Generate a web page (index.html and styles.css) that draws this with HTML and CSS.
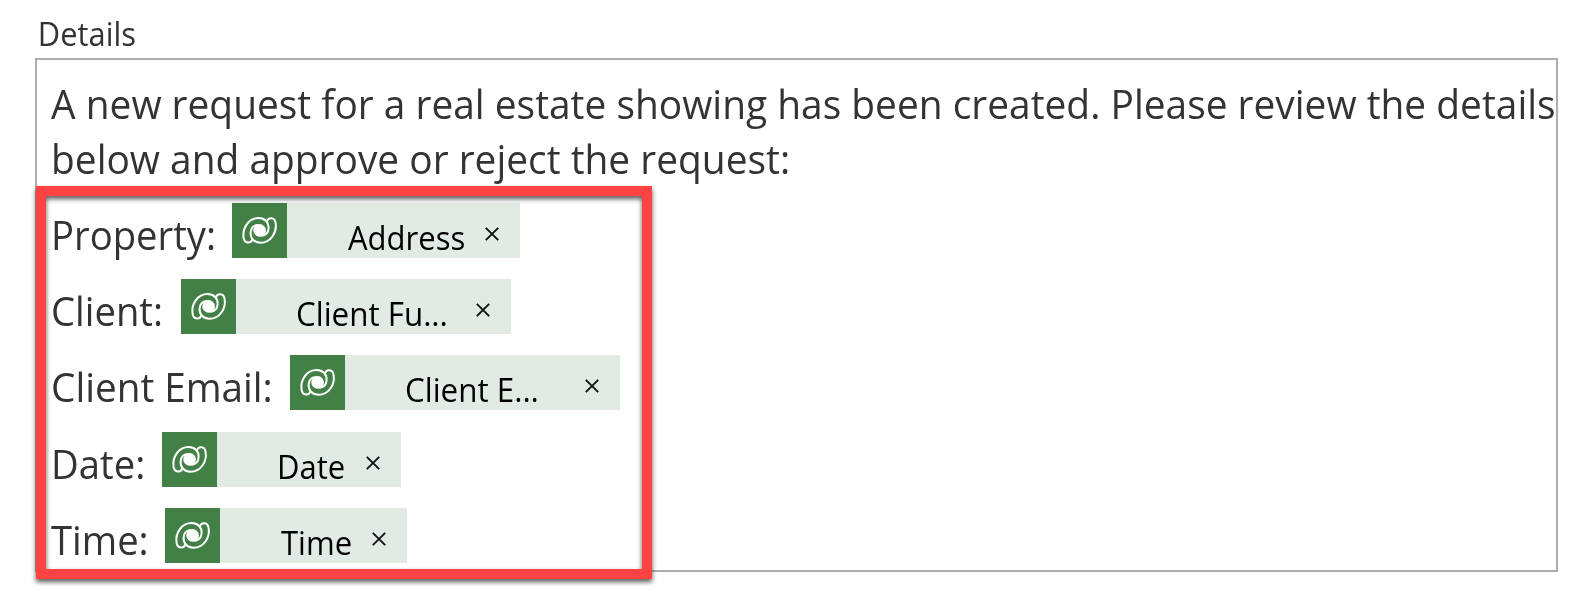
FILE: index.html
```html
<!DOCTYPE html>
<html lang="en">
<head>
<meta charset="utf-8">
<title>Details</title>
<link rel="stylesheet" href="styles.css">
</head>
<body>
<svg class="defs" width="0" height="0">
  <defs>
    <g id="half">
      <path d="M20.2 36.6C18.8 40.6 12.6 40.8 11.6 35C10 25 16.6 15.1 26.6 15.1C33 15.1 37 19.6 36.6 25.2C36.3 29.4 33.8 32.2 30 32.8"/>
    </g>
    <symbol id="dataverse" viewBox="0 0 55 55">
      <g fill="none" stroke="#fff" stroke-width="2" stroke-linecap="round">
        <use href="#half"/>
        <use href="#half" transform="rotate(180 27.6 27.4)"/>
      </g>
      <circle cx="27.6" cy="27.4" r="6.3" fill="#fff"/>
    </symbol>
    <symbol id="close" viewBox="0 0 14 14">
      <path d="M.8 .8L13.2 13.2M13.2 .8L.8 13.2" fill="none" stroke="#111" stroke-width="1.9"/>
    </symbol>
  </defs>
</svg>
<main class="field">
  <label class="field-label">Details</label>
  <div class="editor">
    <p class="message">A new request for a real estate showing has been created. Please review the details<br>below and approve or reject the request:</p>
    <div class="rows">
      <div class="row property"><span class="name"><span class="text">Property:</span></span><span class="token"><svg class="logo"><use href="#dataverse"/></svg><span class="value">Address</span><svg class="close"><use href="#close"/></svg></span></div>
      <div class="row client"><span class="name"><span class="text">Client:</span></span><span class="token"><svg class="logo"><use href="#dataverse"/></svg><span class="value">Client Fu...</span><svg class="close"><use href="#close"/></svg></span></div>
      <div class="row email"><span class="name"><span class="text">Client Email:</span></span><span class="token"><svg class="logo"><use href="#dataverse"/></svg><span class="value">Client E...</span><svg class="close"><use href="#close"/></svg></span></div>
      <div class="row date"><span class="name"><span class="text">Date:</span></span><span class="token"><svg class="logo"><use href="#dataverse"/></svg><span class="value">Date</span><svg class="close"><use href="#close"/></svg></span></div>
      <div class="row time"><span class="name"><span class="text">Time:</span></span><span class="token"><svg class="logo"><use href="#dataverse"/></svg><span class="value">Time</span><svg class="close"><use href="#close"/></svg></span></div>
    </div>
  </div>
  <div class="highlight"></div>
</main>
</body>
</html>
```
FILE: styles.css
```css
* { box-sizing: border-box; }
body {
  margin: 0;
  background: #fff;
  color: #333;
  font-family: "Open Sans", "Noto Sans", sans-serif;
  overflow: hidden;
}
.defs { position: absolute; }
.field { position: relative; height: 593px; padding: 12px 22px 0 35px; }
.field-label {
  display: block;
  width: 200px;
  height: 46px;
  padding-left: 3px;
  font-size: 33px;
  line-height: 44px;
  white-space: nowrap;
  transform: scaleX(.935);
  transform-origin: left;
}
.editor {
  height: 514px;
  padding: 16px 0 0 14px;
  border: 2px solid #adadad;
  font-size: 41px;
}
.message {
  width: max-content;
  margin: 0;
  line-height: 55px;
  white-space: nowrap;
  transform: scaleX(.9485);
  transform-origin: left;
}
.rows { display: flex; flex-direction: column; gap: 21px; padding-top: 17px; }
.row { display: flex; height: 55px; white-space: nowrap; }
.email { margin-bottom: 1px; }
.name { flex: none; padding-top: 4px; line-height: 55px; }
.text { display: inline-block; transform: scaleX(.933); transform-origin: left; }
.email .text { transform: scaleX(.944); }
.property .name { width: 181px; }
.client .name { width: 130px; }
.email .name { width: 239px; }
.date .name { width: 111px; }
.time .name { width: 114px; }
.token { display: flex; height: 55px; background: #e2ebe3; color: #000; }
.property .token { width: 288px; }
.client .token, .email .token { width: 330px; }
.date .token { width: 239px; }
.time .token { width: 242px; }
.logo { flex: none; width: 55px; height: 55px; background: #428046; }
.value {
  flex: none;
  margin-left: 60px;
  padding-top: 7px;
  font-size: 33px;
  line-height: 55px;
  transform: scaleX(.94);
  transform-origin: left;
}
.property .value, .time .value { margin-left: 61px; }
.client .value, .email .value { transform: scaleX(.95); }
.close { flex: none; width: 14px; height: 14px; margin: 24px 21px 0 auto; }
.highlight {
  position: absolute;
  left: 36px;
  top: 186px;
  width: 616px;
  height: 393px;
  border: 10px solid #ff4343;
  filter: drop-shadow(0 3px 2.5px rgba(0, 0, 0, .65));
}
```
